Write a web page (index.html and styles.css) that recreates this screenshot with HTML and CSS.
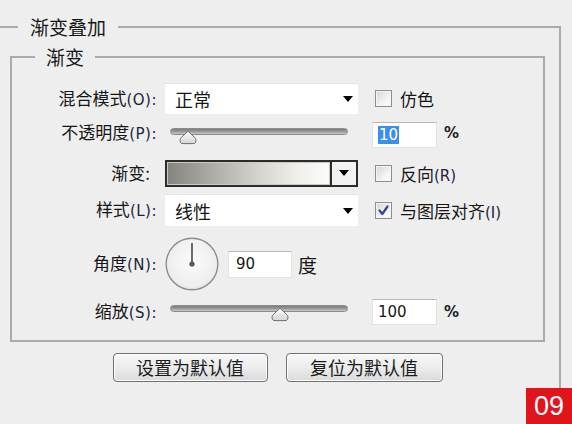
FILE: index.html
```html
<!DOCTYPE html>
<html lang="zh-CN">
<head>
<meta charset="utf-8">
<title>渐变叠加</title>
<link rel="stylesheet" href="styles.css">
</head>
<body>
<fieldset class="outer">
  <legend class="outer-legend">渐变叠加</legend>
  <fieldset class="inner">
    <legend class="inner-legend">渐变</legend>

    <div class="row r1">
      <div class="lbl">混合模式<span class="en">(O):</span></div>
      <div class="select"><span>正常</span><i class="caret"></i></div>
      <div class="check"><span class="box"></span><span class="ctext">仿色</span></div>
    </div>

    <div class="row r2">
      <div class="lbl">不透明度<span class="en">(P):</span></div>
      <div class="slider">
        <div class="track"></div>
        <svg class="thumb t-opacity" width="20" height="15" viewBox="0 0 20 15"><defs><linearGradient id="tg1" x1="0" y1="0" x2="0" y2="1"><stop offset="0" stop-color="#ffffff"/><stop offset="1" stop-color="#d4d4d4"/></linearGradient></defs><path d="M10 1.2 L17.6 8.4 Q19 13.6 15 13.6 H5 Q1 13.6 2.4 8.4 Z" fill="url(#tg1)" stroke="#6f6f6f" stroke-width="1"/></svg>
      </div>
      <div class="num"><div class="input"><span class="sel">10</span></div><span class="pct">%</span></div>
    </div>

    <div class="row r3">
      <div class="lbl lbl-short">渐变:</div>
      <div class="gradbox"><div class="grad"></div><div class="gbtn"><i class="caret"></i></div></div>
      <div class="check"><span class="box"></span><span class="ctext">反向<span class="en">(R)</span></span></div>
    </div>

    <div class="row r4">
      <div class="lbl">样式<span class="en">(L):</span></div>
      <div class="select"><span>线性</span><i class="caret"></i></div>
      <div class="check"><span class="box"><svg width="13" height="13" viewBox="0 0 13 13"><path d="M2.5 6.5 L5.3 10 L10.5 2.5" fill="none" stroke="#33458c" stroke-width="2.2" stroke-linecap="round" stroke-linejoin="round"/></svg></span><span class="ctext">与图层对齐<span class="en">(I)</span></span></div>
    </div>

    <div class="row r5">
      <div class="lbl">角度<span class="en">(N):</span></div>
      <div class="angle">
        <svg class="dial" width="54" height="54" viewBox="0 0 54 54"><defs><radialGradient id="dg" cx="0.5" cy="0.45" r="0.6"><stop offset="0" stop-color="#fbfbfb"/><stop offset="0.8" stop-color="#eeeeee"/><stop offset="1" stop-color="#dcdcdc"/></radialGradient></defs><circle cx="27" cy="27" r="25.8" fill="url(#dg)" stroke="#8c8c8c" stroke-width="1.4"/><line x1="27" y1="27" x2="27" y2="6" stroke="#6a6a6a" stroke-width="2"/><circle cx="27" cy="27" r="2.6" fill="#555555"/></svg>
        <div class="input deg">90</div>
        <span class="degch">度</span>
      </div>
    </div>

    <div class="row r6">
      <div class="lbl">缩放<span class="en">(S):</span></div>
      <div class="slider">
        <div class="track"></div>
        <svg class="thumb t-scale" width="20" height="15" viewBox="0 0 20 15"><defs><linearGradient id="tg2" x1="0" y1="0" x2="0" y2="1"><stop offset="0" stop-color="#ffffff"/><stop offset="1" stop-color="#d4d4d4"/></linearGradient></defs><path d="M10 1.2 L17.6 8.4 Q19 13.6 15 13.6 H5 Q1 13.6 2.4 8.4 Z" fill="url(#tg2)" stroke="#6f6f6f" stroke-width="1"/></svg>
      </div>
      <div class="num"><div class="input">100</div><span class="pct">%</span></div>
    </div>
  </fieldset>

  <div class="buttons">
    <button class="btn b1" type="button">设置为默认值</button>
    <button class="btn b2" type="button">复位为默认值</button>
  </div>
</fieldset>
<div class="badge">09</div>
</body>
</html>
```

FILE: styles.css
```css
html, body {
  margin: 0;
  padding: 0;
}
body {
  width: 572px;
  height: 424px;
  overflow: hidden;
  position: relative;
  background: #eeeeee;
  font-family: "Noto Sans CJK SC", sans-serif;
  color: #161616;
}

.outer {
  margin: 15px 11px 0 -20px;
  padding: 0;
  border: 2px solid #ababab;
  height: 420px;
  min-width: 0;
}
.outer-legend {
  margin-left: 36px;
  padding: 0 12px;
  font-size: 19px;
  line-height: 24px;
}

.inner {
  margin: 6px 14px 0 28px;
  padding: 14px 0 7px 0;
  border: 2px solid #ababab;
  min-width: 0;
}
.inner-legend {
  margin-left: 23px;
  padding: 0 11px;
  font-size: 19px;
  line-height: 24px;
}

.row {
  display: flex;
  align-items: center;
}
.r1 { height: 31px; }
.r2 { height: 38px; }
.r3 { height: 42px; }
.r4 { height: 32px; }
.r5 { height: 54px; margin-top: 11px; }
.r6 { height: 42px; }

.lbl {
  width: 145px;
  margin-right: 8px;
  text-align: right;
  font-size: 17px;
  line-height: 20px;
  white-space: nowrap;
}
.lbl-short {
  width: 138px;
  margin-right: 15px;
}
.en {
  font-family: "DejaVu Sans", sans-serif;
  font-size: 15px;
  letter-spacing: 0.5px;
  color: #1d2438;
}

.select {
  width: 193px;
  height: 100%;
  box-sizing: border-box;
  background: #ffffff;
  border-top: 1px solid #e4e4e4;
  display: flex;
  align-items: center;
  justify-content: space-between;
  padding: 0 5px 0 10px;
  font-size: 18px;
}
.caret {
  display: block;
  width: 0;
  height: 0;
  border-left: 5px solid transparent;
  border-right: 5px solid transparent;
  border-top: 6px solid #000000;
}

.check {
  display: flex;
  align-items: center;
  margin-left: 17px;
  font-size: 17px;
  white-space: nowrap;
}
.box {
  width: 17px;
  height: 17px;
  box-sizing: border-box;
  border: 1px solid #8e8e8e;
  background: linear-gradient(135deg, #d6d6d6, #f7f7f7 70%, #ffffff);
  box-shadow: inset 0 0 0 1px #f4f4f4;
  display: flex;
  align-items: center;
  justify-content: center;
  margin-right: 8px;
}
.ctext .en {
  letter-spacing: 0;
}

.slider {
  position: relative;
  width: 178px;
  height: 100%;
  margin-left: 5px;
  margin-right: 10px;
}
.track {
  margin-top: 14px;
  height: 7px;
  box-sizing: border-box;
  border-radius: 4px;
  border: 1px solid #8c8c8c;
  background: linear-gradient(#7a7a7a, #9a9a9a 50%, #c8c8c8);
}
.thumb {
  position: absolute;
  top: 16px;
}
.t-opacity { left: 8px; }
.t-scale { left: 100px; }

.num {
  display: flex;
  align-items: center;
  margin-left: 14px;
}
.input {
  width: 65px;
  height: 26px;
  box-sizing: border-box;
  background: #ffffff;
  border: 1px solid #e2e2e2;
  border-top-color: #b9b9b9;
  display: flex;
  align-items: center;
  padding-left: 5px;
  font-family: "DejaVu Sans", sans-serif;
  font-size: 15px;
  color: #151515;
}
.r2 .input { margin-top: 4px; }
.sel {
  background: #3d8ee8;
  color: #ffffff;
  line-height: 18px;
  padding: 0 1px;
}
.pct {
  margin-left: 7px;
  font-family: "DejaVu Sans", sans-serif;
  font-size: 15px;
  font-weight: bold;
  color: #222222;
}

.gradbox {
  width: 193px;
  height: 27px;
  box-sizing: border-box;
  border: 2px solid #2c2c2c;
  display: flex;
  background: #f2f2f2;
}
.grad {
  flex: 1;
  border: 1px solid #c9c9c6;
  background: linear-gradient(to right, #85847f, #a9a8a3 25%, #d3d2cd 55%, #f0efea 80%, #fbfbf8);
}
.gbtn {
  width: 24px;
  border-left: 2px solid #2c2c2c;
  display: flex;
  align-items: center;
  justify-content: center;
}

.angle {
  display: flex;
  align-items: center;
}
.dial {
  display: block;
}
.deg {
  width: 64px;
  height: 27px;
  margin-left: 9px;
  padding-left: 7px;
}
.degch {
  margin-left: 6px;
  font-size: 19px;
}

.buttons {
  margin: 11px 14px 0 28px;
  display: flex;
  justify-content: center;
  gap: 18px;
}
.btn {
  height: 29px;
  box-sizing: border-box;
  padding: 0;
  border: 1px solid #717171;
  border-radius: 4px;
  background: linear-gradient(#f7f7f7, #ececec 50%, #dadada);
  box-shadow: inset 0 0 0 1px #fbfbfb;
  font-family: "Noto Sans CJK SC", sans-serif;
  font-size: 18px;
  line-height: 25px;
  color: #1b1b1b;
}
.b1 { width: 155px; }
.b2 { width: 157px; }

.badge {
  position: absolute;
  right: 0;
  bottom: 0;
  width: 46px;
  height: 36px;
  background: #e1131b;
  color: #ffffff;
  font-family: "Liberation Sans", sans-serif;
  font-size: 27px;
  line-height: 36px;
  text-align: center;
}
```
